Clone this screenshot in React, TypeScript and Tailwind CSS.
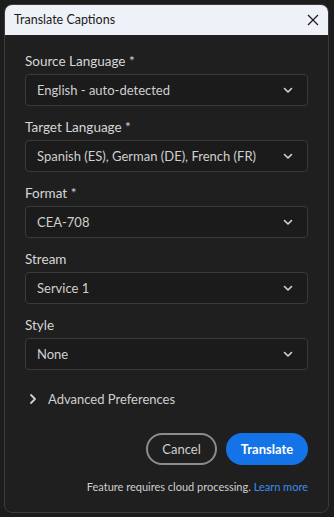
import React from "react";

const Chevron = () => (
  <svg width="12" height="12" viewBox="0 0 12 12" fill="none">
    <path d="M2.5 4.5 L6 8 L9.5 4.5" stroke="#d4d4d4" strokeWidth="1.6" strokeLinecap="round" strokeLinejoin="round" />
  </svg>
);

const Field = ({ label, value }: { label: string; value: string }) => (
  <div className="flex flex-col">
    <div className="h-[20px] text-[13.5px] leading-[20px] text-[#d6d6d6]">{label}</div>
    <div className="mt-[3px] flex h-[32px] items-center justify-between rounded-[4px] border border-[#3a3a3a] bg-[#1b1b1b] pl-[11px] pr-[13px]">
      <span className="whitespace-nowrap text-[13px] leading-[20px] text-[#cfcfcf]">{value}</span>
      <Chevron />
    </div>
  </div>
);

export default function App() {
  return (
    <div className="h-[517px] w-[334px] bg-[#1c1c1c] p-[4px] pr-[5px]" style={{ fontFamily: "Lato, 'Open Sans', sans-serif" }}>
      <div className="flex h-[509px] flex-col overflow-hidden rounded-[8px] border border-[#3c3c3c] bg-[#1f1f1f]">
        <div className="flex h-[30px] shrink-0 items-center justify-between bg-[#eff1f8] pl-[9px] pr-[8px]">
          <span className="text-[12.5px] leading-[18px] text-[#1a1a1a]">Translate Captions</span>
          <svg width="14" height="14" viewBox="0 0 14 14">
            <path d="M2 2 L12 12 M12 2 L2 12" stroke="#1a1a1a" strokeWidth="1.2" />
          </svg>
        </div>
        <div className="flex flex-col px-[20px] pt-[16px]">
          <div className="flex flex-col gap-[11px]">
            <Field label="Source Language *" value="English - auto-detected" />
            <Field label="Target Language *" value="Spanish (ES), German (DE), French (FR)" />
            <Field label="Format *" value="CEA-708" />
            <Field label="Stream" value="Service 1" />
            <Field label="Style" value="None" />
          </div>
          <div className="mt-[19px] flex h-[20px] items-center gap-[10px] pl-[3px]">
            <svg width="10" height="12" viewBox="0 0 10 12" fill="none">
              <path d="M3 2 L7 6 L3 10" stroke="#cfcfcf" strokeWidth="1.8" strokeLinecap="round" strokeLinejoin="round" />
            </svg>
            <span className="text-[13px] leading-[20px] text-[#cfcfcf]">Advanced Preferences</span>
          </div>
          <div className="mt-[24px] flex justify-end gap-[9px]">
            <button className="h-[32px] w-[71px] rounded-full border-2 border-[#8c8c8c] text-[13px] leading-[20px] text-[#cfcfcf]">Cancel</button>
            <button className="h-[32px] w-[82px] rounded-full bg-[#1473e6] text-[13px] font-bold leading-[20px] text-white">Translate</button>
          </div>
          <div className="mt-[14px] text-right text-[11px] leading-[16px] text-[#cfcfcf]">
            Feature requires cloud processing. <span className="text-[#3a8ef0]">Learn more</span>
          </div>
        </div>
      </div>
    </div>
  );
}
